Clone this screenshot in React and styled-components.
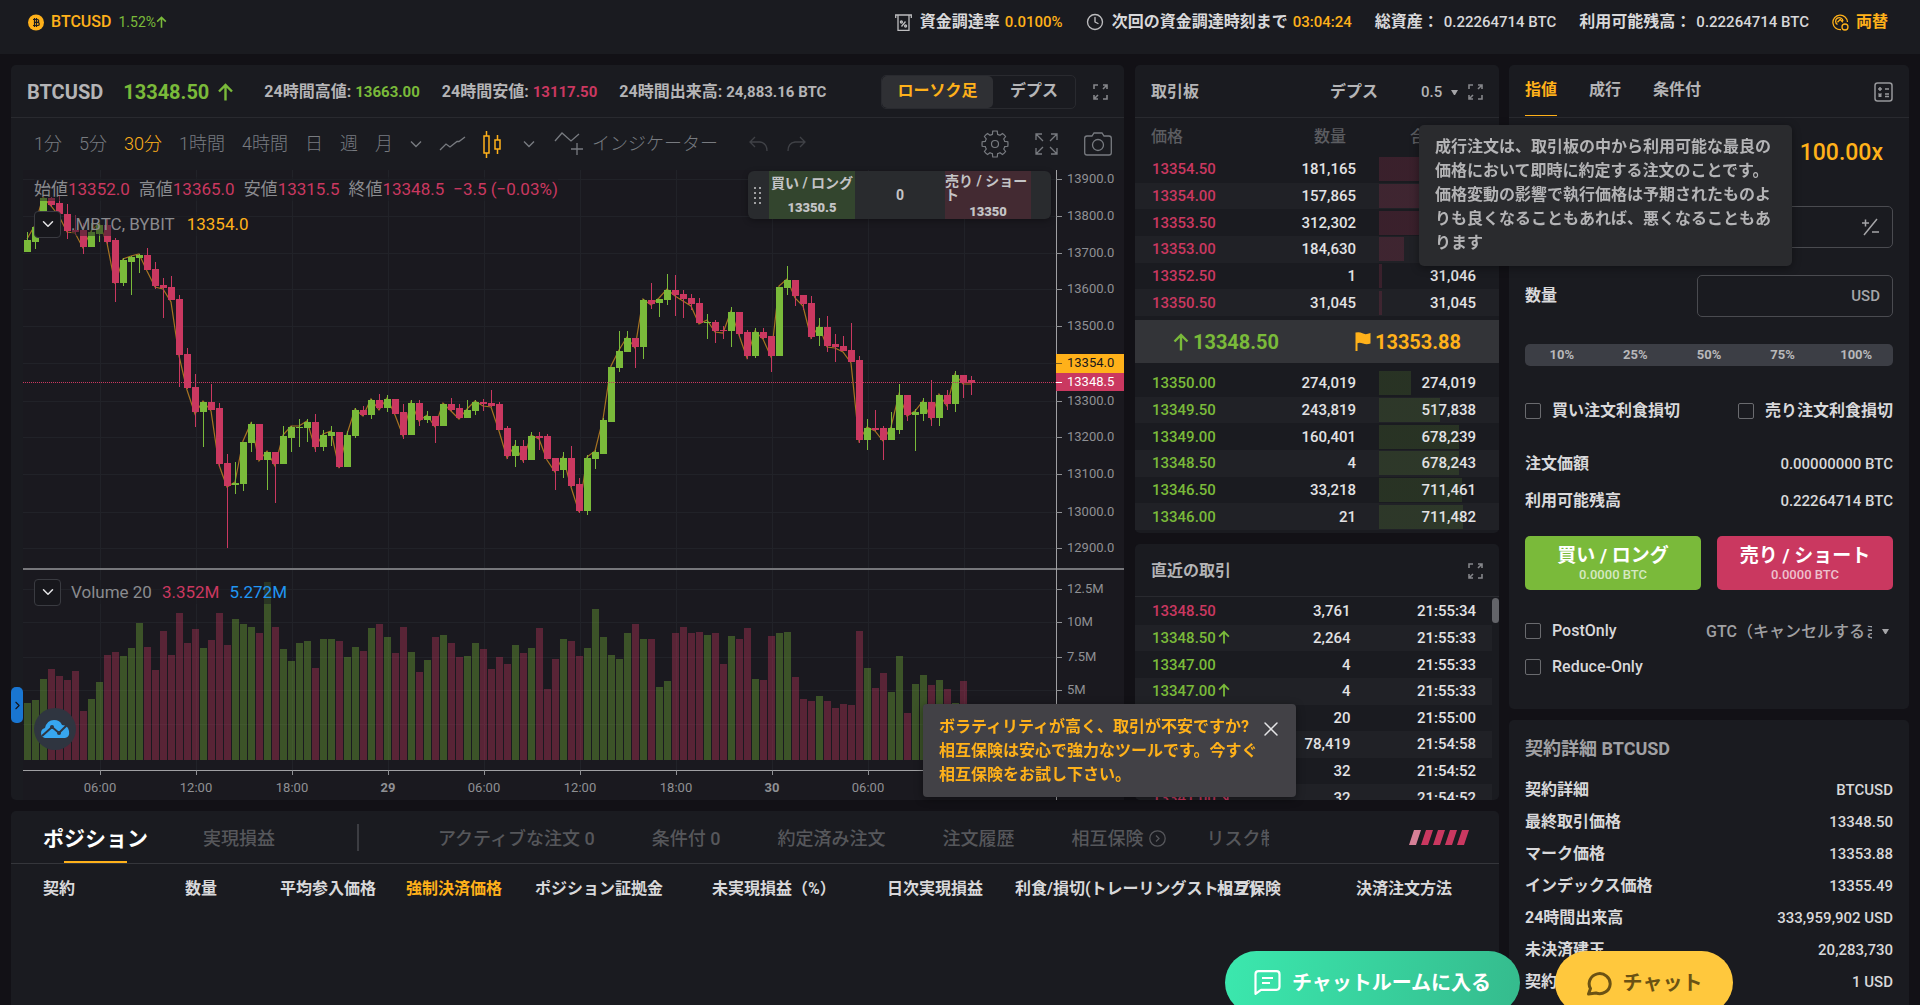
import React from 'react';
import styled, { createGlobalStyle, css } from 'styled-components';
import { ChevronDown, ChevronRight, Clock, X } from 'lucide-react';

const green = '#7aba3a';
const red = '#ca3860';
const orange = '#ffb11a';
const panel = '#1a1b20';

const GlobalStyle = createGlobalStyle`
  * {
    box-sizing: border-box;
  }

  body {
    margin: 0;
    background: #121116;
  }

  body, button, input, select {
    font-family: Roboto, "Noto Sans CJK JP", sans-serif;
  }

  button {
    padding: 0;
    border: 0;
    background: none;
    color: inherit;
    font-size: inherit;
    font-weight: inherit;
    line-height: inherit;
    cursor: pointer;
  }

  table {
    border-collapse: collapse;
    table-layout: fixed;
  }

  svg {
    display: block;
    flex: none;
  }
`;

const Page = styled.div`
  height: 100vh;
  overflow: hidden;
  color: #d8d8da;
  font-size: 16px;
  font-weight: 700;
  line-height: 24px;
`;

const Num = styled.span`
  font-size: ${p => p.$size || 15}px;
  font-weight: ${p => p.$weight || 500};
  color: ${p => p.$color || 'inherit'};
`;

/* top bar */

const TopBar = styled.header`
  display: flex;
  justify-content: space-between;
  height: 54px;
  padding: 10px 32px 0 28px;
  background: ${panel};
`;

const TopGroup = styled.div`
  display: flex;
  align-items: center;
  height: 24px;
  gap: ${p => p.$gap}px;
  white-space: nowrap;
`;

const TopLink = styled.a`
  display: flex;
  align-items: center;
  gap: 7px;
  color: ${orange};
  text-decoration: none;
`;

const TopItem = styled.div`
  display: flex;
  align-items: center;
  gap: 5px;

  svg {
    margin-right: 3px;
  }
`;

/* layout */

const Layout = styled.main`
  display: grid;
  grid-template-columns: minmax(0, 1fr) 400px;
  gap: 10px;
  padding: 11px 11px 0;
`;

const Left = styled.div`
  display: grid;
  grid-template-columns: minmax(0, 1fr) 364px;
  gap: 11px;
  align-content: start;
`;

const Stack = styled.div`
  display: flex;
  flex-direction: column;
  gap: 11px;
  min-height: 0;
`;

const Panel = styled.section`
  background: ${panel};
  border-radius: 5px;
  min-width: 0;
`;

const PanelHead = styled.div`
  display: flex;
  align-items: center;
  height: 53px;
  padding: 2px 16px 0;
  border-bottom: 1px solid #292a2f;
  color: #b4b4b6;
  white-space: nowrap;
`;

const Push = styled.div`
  flex: 1;
`;

const IconButton = styled.button`
  display: flex;
  color: ${p => p.$color || '#85868a'};
`;

/* chart */

const ChartHead = styled(PanelHead)`
  gap: 22px;
`;

const Ticker = styled.div`
  display: flex;
  align-items: center;
  gap: 20px;
  margin-right: 8px;
  font-size: 20px;
  font-weight: 700;
`;

const Last = styled.div`
  display: flex;
  align-items: center;
  gap: ${p => (p.$tight ? 0 : 8)}px;
  color: ${p => p.$color};
`;

const Stat = styled.div`
  display: flex;
  gap: 4px;
`;

const ViewTools = styled.div`
  display: flex;
  align-items: center;
  gap: 17px;
`;

const Toggle = styled.div`
  display: flex;
  height: 34px;
  border: 1px solid #292a2f;
  border-radius: 5px;
`;

const ToggleButton = styled.button`
  width: ${p => (p.$active ? 111 : 82)}px;
  padding-bottom: 2px;
  border-radius: 5px;
  ${p => p.$active && css`
    background: #2f3034;
    color: ${orange};
  `}
`;

const Toolbar = styled.div`
  display: flex;
  align-items: center;
  gap: 17px;
  height: 52px;
  padding: 0 12px 0 23px;
  color: #787b80;
  font-size: 18px;
  font-weight: 300;
  white-space: nowrap;
`;

const Tool = styled.button`
  display: flex;
  align-items: center;
  gap: 8px;
  color: ${p => (p.$active ? orange : 'inherit')};
  opacity: ${p => (p.$dim ? 0.4 : 1)};
  margin-left: ${p => p.$gap || 0}px;
`;

const Canvas = styled.div`
  position: relative;
  margin-left: 12px;
  background: #1a191f;
`;

const Plot = styled.svg`
  width: 100%;
  height: auto;
  font-family: Roboto, sans-serif;
  font-size: 13px;
  font-weight: 400;
`;

const Legend = styled.div`
  position: absolute;
  left: 11px;
  top: ${p => p.$top}px;
  display: flex;
  align-items: center;
  gap: 10px;
  height: 26px;
  color: #8a8b8f;
  font-size: 17px;
  font-weight: 400;
  white-space: nowrap;
`;

const LegendText = styled.div`
  display: flex;
  gap: ${p => p.$gap}px;
  background: rgba(26, 25, 31, 0.5);

  b {
    font-weight: 400;
    color: ${p => p.$color || red};
  }
`;

const LegendButton = styled.button`
  display: flex;
  align-items: center;
  justify-content: center;
  width: 27px;
  height: 27px;
  border: 1px solid #3a3b41;
  border-radius: 4px;
  background: #17171c;
  color: #e4e4e6;
`;

const QuickOrder = styled.div`
  position: absolute;
  top: 1px;
  right: 73px;
  display: flex;
  align-items: stretch;
  width: 303px;
  height: 48px;
  padding-left: 6px;
  border-radius: 6px;
  background: #292b2e;
  box-shadow: 0 2px 6px rgba(0, 0, 0, 0.3);
  color: #c4c4c6;
  font-size: 14px;
`;

const Grip = styled.div`
  display: grid;
  grid-template-columns: 2px 2px;
  gap: 3px;
  align-content: center;
  width: 15px;

  i {
    width: 2px;
    height: 2px;
    background: #a0a0a2;
  }
`;

const QuickSide = styled.button`
  display: flex;
  flex-direction: column;
  justify-content: space-between;
  width: 86px;
  padding: ${p => (p.$wrap ? '3px 0 0' : '5px 0 4px')};
  background: ${p => p.$bg};
  line-height: 14px;
  text-align: ${p => (p.$wrap ? 'left' : 'center')};
  word-break: break-all;

  b {
    align-self: center;
    font-size: 13px;
  }

  span {
    align-self: ${p => (p.$wrap ? 'stretch' : 'center')};
  }
`;

const QuickSize = styled.div`
  display: flex;
  align-items: center;
  justify-content: center;
  width: 90px;
`;

const Handle = styled.button`
  position: absolute;
  left: -12px;
  top: 517px;
  display: flex;
  align-items: center;
  width: 12px;
  height: 36px;
  border-radius: 5px;
  background: #1976d2;
  color: #14141a;
`;

const Cloud = styled.a`
  position: absolute;
  left: 11px;
  top: 538px;
`;

/* order book and trades */

const DataTable = styled.table`
  width: 100%;
  height: ${p => p.$height}px;
  font-size: 15px;
  font-weight: 500;
  line-height: 20px;
  color: #e2e2e4;

  th {
    height: 38px;
    padding: 0;
    font-size: 16px;
    font-weight: 500;
    color: #5c5d61;
  }

  td {
    padding: 0;
  }

  tbody tr:nth-child(even) {
    background: #202126;
  }
`;

const PriceCell = styled.td`
  width: ${p => p.$width}px;
  && {
    padding-left: 17px;
  }
  color: ${p => (p.$up ? green : red)};
  white-space: nowrap;

  svg {
    display: inline-block;
    margin-left: 2px;
    vertical-align: -1px;
  }
`;

const NumCell = styled.td`
  text-align: right;
  && {
    padding-right: ${p => p.$right}px;
  }
`;

const DepthCell = styled(NumCell)`
  background-image: linear-gradient(${p => p.$bar}, ${p => p.$bar});
  background-repeat: no-repeat;
  background-position: left center;
`;

const HeadCell = styled.th`
  width: ${p => p.$width}px;
  text-align: ${p => p.$align || 'left'};
  && {
    padding: 0 ${p => p.$right || 0}px 0 ${p => p.$left || 0}px;
  }
`;

const Mark = styled.div`
  display: grid;
  grid-template-columns: 1fr 1fr;
  align-items: center;
  justify-items: center;
  height: 43px;
  margin: 4px 0 7px;
  background: #333438;
  font-size: 20px;
  font-weight: 700;

  div {
    gap: 4px;
  }
`;

const Book = styled(Panel)`
  padding-bottom: 3px;
`;

const Precision = styled.select`
  width: 30px;
  margin-left: 43px;
  padding: 0;
  border: 0;
  appearance: none;
  background: none;
  color: inherit;
  font-size: 15px;
  font-weight: 500;
`;

const Caret = styled.i`
  width: 7px;
  margin-right: ${p => p.$right || 0}px;
  border: solid transparent;
  border-width: 5px 3px 0;
  border-top-color: #a5a5a8;
`;

const Trades = styled(Panel)`
  display: flex;
  flex-direction: column;
  flex: 1 1 0;
  min-height: 0;
  overflow: hidden;
`;

const TradesBody = styled.div`
  display: flex;
  align-items: flex-start;
  flex: 1 1 0;
  min-height: 0;
  padding-top: 1px;
  overflow: hidden;
`;

const Thumb = styled.div`
  flex: none;
  width: 7px;
  height: 25px;
  border-radius: 4px;
  background: #636469;
`;

/* positions */

const Positions = styled(Panel)`
  grid-column: 1 / -1;
  min-height: 240px;
`;

const TabRow = styled.div`
  display: flex;
  align-items: center;
  height: 53px;
  padding: 0 30px 0 32px;
  border-bottom: 1px solid #35363b;
  white-space: nowrap;
  color: #56575b;
  font-size: 18px;
`;

const TabGroup = styled.div`
  display: flex;
  align-items: center;
  gap: ${p => p.$gap}px;
  height: 100%;
`;

const BigTab = styled.button`
  position: relative;
  display: flex;
  align-items: center;
  gap: 6px;
  height: 100%;
  padding-top: 3px;
  font-weight: 500;
  ${p => p.$active && css`
    color: #fff;
    font-size: 21px;
    font-weight: 700;

    &::after {
      content: '';
      position: absolute;
      left: 20%;
      right: 20%;
      bottom: 0;
      height: 2px;
      background: ${orange};
    }
  `}
`;

const ClippedTab = styled(BigTab)`
  width: 63px;
  margin-left: -17px;
  overflow: hidden;
`;

const Divider = styled.div`
  width: 2px;
  height: 27px;
  margin: 0 79px 0 82px;
  background: #3c3d42;
`;

const PositionTable = styled.table`
  width: 100%;
  margin-top: 13px;

  th {
    padding: 0;
    font-weight: 700;
    text-align: left;
    white-space: nowrap;
  }
`;

const PositionHead = styled.th`
  width: ${p => (p.$width ? `${p.$width}px` : 'auto')};
  color: ${p => (p.$hot ? orange : 'inherit')};
`;

const TableWrap = styled.div`
  padding-left: 32px;
`;

/* order form */

const FormTab = styled.button`
  position: relative;
  height: 50px;
  margin-right: 32px;
  padding-bottom: 5px;
  ${p => p.$active && css`
    color: ${orange};

    &::after {
      content: '';
      position: absolute;
      left: 0;
      right: 0;
      bottom: 1px;
      height: 1px;
      background: ${orange};
    }
  `}
`;

const Form = styled.form`
  padding: 0 16px 30px;
`;

const FormRow = styled.div`
  display: flex;
  align-items: center;
  justify-content: space-between;
  gap: 16px;
  min-height: 24px;
  margin-top: ${p => p.$gap}px;
  white-space: nowrap;
`;

const Leverage = styled(FormRow)`
  height: 70px;
  padding-right: 10px;
`;

const Field = styled.div`
  display: flex;
  align-items: center;
  width: 196px;
  height: 42px;
  padding: 0 12px;
  border: 1px solid #4a4b50;
  border-radius: 5px;
  color: #a5a5a8;

  input {
    flex: 1;
    min-width: 0;
    border: 0;
    outline: 0;
    background: none;
    color: #fff;
    font-size: 15px;
  }
`;

const Percents = styled.div`
  display: grid;
  grid-template-columns: repeat(5, 1fr);
  height: 22px;
  margin-top: 27px;
  border-radius: 5px;
  background: #3c3e45;
  color: #b8b8ba;
  font-size: 13px;
  font-weight: 700;
  line-height: 22px;
`;

const Check = styled.label`
  display: flex;
  align-items: center;
  gap: 11px;
  font-weight: ${p => p.$weight || 700};

  input {
    appearance: none;
    width: 16px;
    height: 16px;
    margin: 0;
    border: 1px solid #6a6b6f;
    border-radius: 2px;
  }
`;

const Submit = styled.button`
  flex: 1;
  height: 54px;
  border-radius: 5px;
  background: ${p => p.$bg};
  color: #fff;
  font-size: 19px;
  line-height: 22px;

  small {
    display: block;
    color: rgba(255, 255, 255, 0.7);
    font-size: 13px;
    font-weight: 500;
    line-height: 15px;
  }
`;

const Tif = styled.div`
  display: flex;
  align-items: center;
  gap: 10px;
  margin-right: 4px;
  color: #a0a0a3;

  select {
    width: 166px;
    padding: 0;
    border: 0;
    appearance: none;
    background: none;
    color: inherit;
    font-size: 16px;
    font-weight: 500;
  }
`;

const Details = styled(Panel)`
  padding: 17px 16px;

  h2 {
    margin: 0 0 13px;
    color: #a0a0a3;
    font-size: 18px;
    font-weight: 700;
  }
`;

const DetailRow = styled.div`
  display: flex;
  justify-content: space-between;
  align-items: center;
  height: 32px;
`;

/* overlays */

const Tooltip = styled.div`
  position: fixed;
  top: 125px;
  right: 128px;
  width: 373px;
  padding: 10px 16px 11px;
  border-radius: 5px;
  background: #2a2b2e;
  color: #b4b4b6;
  box-shadow: 0 2px 8px rgba(0, 0, 0, 0.4);
`;

const Notice = styled.div`
  position: fixed;
  left: 923px;
  bottom: 208px;
  width: 373px;
  height: 93px;
  padding: 11px 16px;
  border-radius: 4px;
  background: #424146;
  color: ${orange};
  box-shadow: 0 2px 8px rgba(0, 0, 0, 0.4);

  p {
    margin: 0;
    white-space: pre;
  }
`;

const Close = styled(IconButton)`
  position: absolute;
  top: 13px;
  right: 13px;
`;

const ChatButton = styled.button`
  position: fixed;
  right: ${p => p.$right}px;
  bottom: -9px;
  display: flex;
  align-items: center;
  justify-content: center;
  gap: 11px;
  width: ${p => p.$width}px;
  height: 63px;
  border-radius: 32px;
  background: ${p => p.$bg};
  color: ${p => p.$color};
  font-size: 20px;
  font-weight: 700;
`;

/* icons */

const Arrow = ({ w = 12, h = 13, down }) => (
  <svg width={w} height={h} viewBox="0 0 16 18" fill="none" stroke="currentColor" strokeWidth="2.4">
    <path d={down ? 'M2 2l10 12M13 5v10H4' : 'M8 17.5V2M1.5 8.5L8 2l6.5 6.5'} />
  </svg>
);

const Expand = () => (
  <svg width="15" height="16" viewBox="0 0 15 16" fill="none" stroke="currentColor" strokeWidth="1.6">
    <path d="M1 5V1h4M10 1h4v4M14 1l-4 4M1 11v4h4M1 15l4-4M14 11v4h-4" />
  </svg>
);

const Coin = () => (
  <svg width="16" height="17" viewBox="0 0 16 17">
    <circle cx="8" cy="8.5" r="8" fill={orange} />
    <path d="M6.5 4v9M8.5 4v9M5 5.5h4.2q1.6 0 1.6 1.4T9.2 8.3H6.5h3q1.8 0 1.8 1.6t-1.8 1.6H5" fill="none" stroke="#1a1b20" strokeWidth="1.2" />
  </svg>
);

const Funding = () => (
  <svg width="17" height="17" viewBox="0 0 17 17" fill="none" stroke="#bdbdbf" strokeWidth="1.3">
    <path d="M0.7 4V1h15.6v3M3 1.5v14.8h11V1.5M6.5 12.5l4-5" />
    <circle cx="6.4" cy="8" r="1" />
    <circle cx="10.6" cy="12" r="1" />
  </svg>
);

const Exchange = () => (
  <svg width="17" height="17" viewBox="0 0 17 17" fill="none" stroke={orange} strokeWidth="1.3">
    <path d="M9 15.6A7.3 7.3 0 1 1 15.5 8M5.5 10.5A3.7 3.7 0 1 1 11 7M5.5 8.2l2.7-2.7 2.7 2.7" />
    <circle cx="13" cy="13" r="3" />
  </svg>
);

const gearPath = Array.from({ length: 8 }, (_, i) => {
  const at = (r, deg) => {
    const a = ((i * 45 + deg) * Math.PI) / 180;
    return `${(14 + r * Math.cos(a)).toFixed(1)} ${(14 + r * Math.sin(a)).toFixed(1)}`;
  };
  return `${i ? 'L' : 'M'}${at(10, -15)}L${at(13, -10)}A13 13 0 0 1 ${at(13, 10)}L${at(10, 15)}A10 10 0 0 1 ${at(10, 30)}`;
}).join('');

const Gear = () => (
  <svg width="28" height="28" viewBox="0 0 28 28" fill="none" stroke="currentColor" strokeWidth="1.2">
    <path d={`${gearPath}Z`} />
    <circle cx="14" cy="14" r="3.5" />
  </svg>
);

const FullScreen = () => (
  <svg width="23" height="22" viewBox="0 0 23 22" fill="none" stroke="currentColor" strokeWidth="1.3">
    <path d="M1 7V1h6M1 1l7 7M16 1h6v6M22 1l-7 7M1 15v6h6M1 21l7-7M22 15v6h-6M22 21l-7-7" />
  </svg>
);

const Camera = () => (
  <svg width="28" height="24" viewBox="0 0 28 24" fill="none" stroke="currentColor" strokeWidth="1.3">
    <path d="M3 4h5l2-3h8l2 3h5q2.3 0 2.3 2.3v14.4q0 2.3-2.3 2.3H3Q.7 23 .7 20.7V6.3Q.7 4 3 4z" />
    <circle cx="14" cy="13" r="5.5" />
  </svg>
);

const Chevron = () => (
  <svg width="12" height="8" viewBox="0 0 12 8" fill="none" stroke="currentColor" strokeWidth="1.4">
    <path d="M1 1.500l5 5 5-5" />
  </svg>
);

const LineTool = () => (
  <svg width="27" height="16" viewBox="0 0 27 16" fill="none" stroke="currentColor" strokeWidth="1.3">
    <path d="M1 14l6-6 4 3 7-5.5h2L26 1" />
  </svg>
);

const CandleTool = () => (
  <svg width="18" height="27" viewBox="0 0 18 27" fill="none" stroke="currentColor" strokeWidth="1.5">
    <path d="M1 5h5v17H1zM3.5 0v5M3.5 22v5M12 9h5v9h-5zM14.5 4v5M14.5 18v5" />
  </svg>
);

const IndicatorTool = () => (
  <svg width="30" height="24" viewBox="0 0 30 24" fill="none" stroke="currentColor" strokeWidth="1.3">
    <path d="M1 9l7-8 9 8 8-7M23 11v12M17 17h12" />
  </svg>
);

const Redo = ({ flip }) => (
  <svg width="19" height="16" viewBox="0 0 19 16" fill="none" stroke="currentColor" strokeWidth="1.3">
    <path d={flip ? 'M6 1L1 6l5 5M1 6h10q7 1 7 9' : 'M13 1l5 5-5 5M18 6H8q-7 1-7 9'} />
  </svg>
);

const Flag = () => (
  <svg width="16" height="19" viewBox="0 0 16 19" fill={orange}>
    <path d="M0.5 0.5q4-1 7 .8t8-.3v10.500q-4 1.500-7.500 0t-5.500-.3V19h-2z" />
  </svg>
);

const Calculator = () => (
  <svg width="19" height="20" viewBox="0 0 19 20" fill="none" stroke="#97989b" strokeWidth="1.5">
    <rect x="1" y="1" width="17" height="18" rx="2.5" />
    <path d="M4 7h4M6 5v4M11 7h4M4.5 11.5l3 3M7.5 11.5l-3 3M11 12h4M11 14.5h4" />
  </svg>
);

const PlusMinus = () => (
  <svg width="19" height="18" viewBox="0 0 19 18" fill="none" stroke="currentColor" strokeWidth="1.5">
    <path d="M1 5h7M4.5 1.5v7M3 17L16 1M11 14h7" />
  </svg>
);

const CircleArrow = () => (
  <svg width="17" height="17" viewBox="0 0 17 17" fill="none" stroke="currentColor" strokeWidth="1.3">
    <circle cx="8.5" cy="8.5" r="7.7" />
    <path d="M7 5.5l3 3-3 3" />
  </svg>
);

const Stripes = () => (
  <svg width="60" height="15" viewBox="0 0 60 15">
    {[0, 1, 2, 3, 4].map(i => (
      <path key={i} d={`M${i * 12 + 5} 0h7l-5 15H${i * 12}z`} fill={i ? red : '#d68097'} />
    ))}
  </svg>
);

const CloudLogo = () => (
  <svg width="42" height="42" viewBox="0 0 42 42">
    <circle cx="21" cy="21" r="21" fill="#2f3540" />
    <path d="M11 30q-4-1-4-5 0-4 4-5 2-8 9-8 6 0 8 5 6 0 7 6 1 6-4 7z" fill="#37a6ef" />
    <path d="M8 28l10-9 7 6 9-9" fill="none" stroke="#2f3540" strokeWidth="2" />
    <circle cx="18" cy="19" r="2" fill="#2f3540" />
    <circle cx="25" cy="25" r="2" fill="#2f3540" />
  </svg>
);

const RoomIcon = () => (
  <svg width="27" height="25" viewBox="0 0 27 25" fill="none" stroke="currentColor" strokeWidth="2.2">
    <path d="M4.5 1.2h18q3 0 3 3v12.6q0 3-3 3H7l-5.5 4V4.2q0-3 3-3zM8 8h11M8 13h8" strokeLinejoin="round" />
  </svg>
);

const ChatIcon = () => (
  <svg width="26" height="26" viewBox="0 0 26 26" fill="none" stroke="currentColor" strokeWidth="3">
    <path d="M2.5 24l2-5.5A10.5 10 0 1 1 10 23z" strokeLinejoin="round" />
  </svg>
);

/* chart data: side, high, body top, body bottom, low, volume top; three units to a pixel */
const candles = [
  [1, 157, 181, 217, 217, 429], [1, 125, 140, 187, 206, 420], [1, 54, 54, 140, 140, 357],
  [0, 50, 54, 75, 82, 328], [0, 48, 69, 103, 110, 348], [0, 73, 102, 152, 177, 360],
  [0, 105, 150, 155, 165, 333], [0, 128, 150, 201, 222, 453], [1, 128, 157, 201, 201, 417],
  [1, 128, 134, 163, 187, 365], [0, 116, 134, 186, 192, 285], [0, 175, 181, 309, 366, 276],
  [1, 234, 241, 309, 318, 288], [1, 228, 231, 245, 345, 264], [1, 222, 226, 234, 278, 189],
  [0, 205, 226, 270, 270, 261], [0, 246, 266, 318, 326, 329], [0, 294, 314, 324, 414, 213],
  [0, 289, 321, 361, 361, 285], [0, 346, 358, 525, 621, 160], [0, 505, 521, 625, 627, 249],
  [0, 582, 621, 697, 741, 208], [1, 666, 666, 697, 801, 264], [0, 613, 666, 690, 690, 240],
  [0, 669, 685, 852, 861, 160], [0, 822, 849, 918, 1104, 256], [1, 846, 909, 915, 942, 177],
  [1, 786, 786, 912, 933, 192], [1, 726, 733, 789, 817, 201], [0, 733, 733, 840, 840, 220],
  [1, 817, 817, 840, 930, 66], [0, 817, 817, 853, 969, 201], [1, 738, 769, 853, 853, 268],
  [1, 738, 741, 774, 817, 304], [1, 717, 741, 744, 801, 249], [1, 717, 726, 745, 786, 244],
  [0, 702, 726, 801, 817, 324], [1, 750, 765, 801, 813, 237], [1, 738, 757, 769, 798, 237],
  [0, 757, 757, 861, 865, 244], [1, 753, 766, 861, 861, 292], [1, 685, 690, 769, 774, 261],
  [0, 678, 690, 705, 708, 273], [1, 658, 661, 705, 717, 204], [0, 642, 661, 685, 690, 192],
  [1, 645, 657, 685, 697, 232], [0, 657, 657, 702, 702, 280], [0, 673, 697, 765, 777, 201],
  [1, 661, 669, 765, 765, 276], [0, 661, 669, 720, 738, 336], [1, 694, 709, 720, 729, 300],
  [0, 709, 709, 738, 789, 232], [1, 673, 673, 738, 738, 225], [0, 654, 673, 690, 693, 249],
  [0, 673, 685, 714, 717, 291], [1, 661, 690, 714, 714, 288], [1, 661, 666, 693, 705, 249],
  [0, 657, 666, 673, 693, 268], [0, 630, 669, 678, 682, 328], [0, 666, 673, 750, 750, 291],
  [0, 738, 745, 829, 837, 312], [1, 780, 798, 829, 861, 256], [0, 780, 798, 840, 849, 280],
  [1, 757, 769, 840, 840, 264], [0, 757, 769, 774, 810, 204], [0, 762, 769, 837, 837, 388],
  [0, 834, 834, 872, 930, 297], [1, 816, 834, 870, 894, 237], [0, 798, 834, 918, 921, 244],
  [0, 894, 913, 993, 999, 288], [1, 825, 834, 993, 1005, 264], [1, 810, 816, 837, 866, 148],
  [1, 715, 721, 821, 821, 232], [1, 561, 561, 725, 725, 285], [1, 453, 513, 564, 577, 297],
  [1, 453, 474, 517, 517, 220], [0, 474, 474, 501, 565, 192], [1, 357, 361, 501, 537, 237],
  [0, 309, 361, 371, 386, 237], [1, 357, 357, 369, 410, 381], [1, 282, 330, 361, 374, 364],
  [0, 285, 330, 345, 409, 220], [0, 330, 342, 358, 414, 201], [0, 342, 354, 373, 389, 220],
  [0, 354, 369, 429, 429, 216], [1, 402, 425, 429, 477, 225], [0, 420, 426, 453, 489, 220],
  [0, 438, 450, 454, 477, 312], [1, 381, 397, 453, 501, 228], [0, 397, 397, 462, 470, 237],
  [0, 450, 457, 529, 538, 204], [1, 444, 457, 528, 533, 357], [0, 445, 457, 474, 477, 360],
  [0, 469, 469, 528, 577, 228], [1, 321, 321, 529, 529, 220], [1, 258, 301, 325, 345, 216],
  [0, 301, 301, 349, 377, 352], [0, 345, 345, 373, 389, 417], [0, 349, 369, 470, 477, 424],
  [1, 414, 441, 469, 498, 408], [0, 409, 441, 498, 517, 424], [0, 462, 492, 501, 546, 444],
  [0, 469, 498, 513, 513, 432], [0, 429, 510, 546, 546, 436], [0, 529, 541, 780, 789, 213],
  [1, 717, 745, 780, 810, 324], [0, 690, 745, 749, 753, 384], [0, 737, 745, 780, 841, 340],
  [1, 697, 745, 780, 780, 396], [1, 612, 645, 750, 761, 288], [0, 645, 645, 705, 722, 460],
  [1, 686, 697, 705, 813, 372], [1, 654, 666, 701, 722, 345], [0, 601, 666, 713, 737, 376],
  [1, 645, 645, 713, 737, 360], [0, 630, 645, 673, 689, 388], [1, 573, 585, 673, 697, 429],
  [0, 585, 585, 609, 654, 364], [0, 588, 601, 609, 645, 463],
];

const priceTicks = [9, 46, 83, 119, 156, 193, 231, 267, 304, 342, 378];
const volumeTicks = [['12.5M', 419], ['10M', 452], ['7.5M', 487], ['5M', 520], ['2.5M', 554]];
const times = ['06:00', '12:00', '18:00', '29', '06:00', '12:00', '18:00', '30', '06:00', '12:00'];

const level = v => Math.round(v / 3) + 10;

const Chart = () => {
  const closes = candles.map(([up, , top, bottom], i) => `${i * 8 + 4},${level(up ? top - 4 : bottom + 4)}`);
  return (
    <Plot viewBox="0 0 1101 630" role="img" aria-label="BTCUSD 30分">
      <g stroke="#212228">
        {priceTicks.map(y => <path key={y} d={`M0 ${y}.5H1033`} />)}
        {volumeTicks.map(([, y]) => <path key={y} d={`M0 ${y}.5H1033`} />)}
        {times.map((t, i) => <path key={i} d={`M${77 + i * 96}.5 0V600`} />)}
      </g>
      <polyline points={closes.join(' ')} fill="none" stroke="#a87422" strokeWidth="1.2" />
      {candles.map(([up, high, top, bottom, low, vol], i) => (
        <g key={i} fill={up ? green : red}>
          <rect x={i * 8 + 4} y={level(high)} width="1" height={level(low) - level(high)} />
          <rect x={i * 8 + 1} y={level(top)} width="7" height={Math.max(1, level(bottom) - level(top))} />
          <rect x={i * 8 + 1} y={390 + Math.round(vol / 3)} width="7" height={200 - Math.round(vol / 3)} opacity="0.36" />
        </g>
      ))}
      <path d="M0 212.5H1033" stroke={red} strokeDasharray="1 1" />
      <path d="M0 399H1101" stroke="#77777b" strokeWidth="2" />
      <path d="M0 600.5H1033M1033.5 0V630" stroke="#a0a0a3" />
      <g fill="#8f9094">
        {priceTicks.map((y, i) => (
          <g key={y}>
            <path d={`M1033 ${y}.5h6`} stroke="#8f9094" />
            <text x="1044" y={y + 4}>{`${13900 - i * 100}.0`}</text>
          </g>
        ))}
        {volumeTicks.map(([label, y]) => (
          <g key={y}>
            <path d={`M1033 ${y}.5h6`} stroke="#8f9094" />
            <text x="1044" y={y + 4}>{label}</text>
          </g>
        ))}
        {times.map((t, i) => (
          <g key={i}>
            <path d={`M${77 + i * 96}.5 600v5`} stroke="#8f9094" />
            <text x={77 + i * 96} y="622" textAnchor="middle" fontWeight={t.length < 3 ? 700 : 400}>{t}</text>
          </g>
        ))}
      </g>
      <rect x="1033" y="184" width="68" height="19" fill={orange} />
      <rect x="1033" y="203" width="68" height="18" fill={red} />
      <path d="M1033 193.5h6" stroke="#7a5a1a" />
      <path d="M1033 212.5h6" stroke="#fff" />
      <text x="1044" y="197" fill="#17171c">13354.0</text>
      <text x="1044" y="216" fill="#fff">13348.5</text>
    </Plot>
  );
};

const ChartPanel = () => (
  <Panel>
    <ChartHead>
      <Ticker>
        <span>BTCUSD</span>
        <Last $color={green}>13348.50 <Arrow w={17} h={18} /></Last>
      </Ticker>
      <Stat>24時間高値: <Num $weight={700} $color={green}>13663.00</Num></Stat>
      <Stat>24時間安値: <Num $weight={700} $color={red}>13117.50</Num></Stat>
      <Stat>24時間出来高: <Num $weight={700}>24,883.16 BTC</Num></Stat>
      <Push />
      <ViewTools>
        <Toggle>
          <ToggleButton $active>ローソク足</ToggleButton>
          <ToggleButton>デプス</ToggleButton>
        </Toggle>
        <IconButton aria-label="拡大"><Expand /></IconButton>
      </ViewTools>
    </ChartHead>
    <Toolbar>
      {['1分', '5分', '30分', '1時間', '4時間', '日', '週', '月'].map(t => (
        <Tool key={t} $active={t === '30分'}>{t}</Tool>
      ))}
      <Tool aria-label="時間足"><Chevron /></Tool>
      <Tool aria-label="ライン"><LineTool /></Tool>
      <Tool $active aria-label="ローソク"><CandleTool /></Tool>
      <Tool $gap={5} aria-label="種類"><Chevron /></Tool>
      <Tool $gap={2}><IndicatorTool />インジケーター</Tool>
      <Tool $dim $gap={14} aria-label="元に戻す"><Redo flip /></Tool>
      <Tool $dim $gap={2} aria-label="やり直す"><Redo /></Tool>
      <Push />
      <Tool aria-label="設定"><Gear /></Tool>
      <Tool $gap={9} aria-label="全画面"><FullScreen /></Tool>
      <Tool $gap={9} aria-label="撮影"><Camera /></Tool>
    </Toolbar>
    <Canvas>
      <Chart />
      <Legend $top={6}>
        <LegendText $gap={9}>
          <span>始値<b>13352.0</b></span>
          <span>高値<b>13365.0</b></span>
          <span>安値<b>13315.5</b></span>
          <span>終値<b>13348.5</b></span>
          <b>−3.5 (−0.03%)</b>
        </LegendText>
      </Legend>
      <Legend $top={41}>
        <LegendButton aria-label="閉じる"><ChevronDown size={18} /></LegendButton>
        <LegendText $gap={12} $color={orange}>.MBTC, BYBIT <b>13354.0</b></LegendText>
      </Legend>
      <Legend $top={409}>
        <LegendButton aria-label="閉じる"><ChevronDown size={18} /></LegendButton>
        <LegendText $gap={10}>Volume 20 <b>3.352M</b> <Num $size={17} $weight={400} $color="#2196f3">5.272M</Num></LegendText>
      </Legend>
      <QuickOrder>
        <Grip>{Array.from({ length: 8 }, (_, i) => <i key={i} />)}</Grip>
        <QuickSide $bg="#33452e"><span>買い / ロング</span><b>13350.5</b></QuickSide>
        <QuickSize>0</QuickSize>
        <QuickSide $bg="#432a32" $wrap><span>売り / ショート</span><b>13350</b></QuickSide>
      </QuickOrder>
      <Handle aria-label="ツール"><ChevronRight size={13} /></Handle>
      <Cloud href="#chart" aria-label="TradingView"><CloudLogo /></Cloud>
    </Canvas>
  </Panel>
);

const asks = [
  ['13354.50', '181,165', 867008],
  ['13354.00', '157,865', 685843],
  ['13353.50', '312,302', 527978],
  ['13353.00', '184,630', 215676],
  ['13352.50', '1', 31046],
  ['13350.50', '31,045', 31045],
];

const bids = [
  ['13350.00', '274,019', 274019],
  ['13349.50', '243,819', 517838],
  ['13349.00', '160,401', 678239],
  ['13348.50', '4', 678243],
  ['13346.50', '33,218', 711461],
  ['13346.00', '21', 711482],
];

const BookRows = ({ rows, up }) => (
  <tbody>
    {rows.map(([price, size, total]) => (
      <tr key={price}>
        <PriceCell $up={up} $width={110}>{price}</PriceCell>
        <NumCell $right={23}>{size}</NumCell>
        <DepthCell
          $right={23}
          $bar={up ? 'rgba(122, 186, 58, 0.15)' : 'rgba(202, 56, 96, 0.18)'}
          style={{ width: 120, backgroundSize: `${Math.floor(total / 8470)}px 24px` }}
        >
          {total.toLocaleString('en-US')}
        </DepthCell>
      </tr>
    ))}
  </tbody>
);

const OrderBook = () => (
  <Book>
    <PanelHead>
      取引板
      <Push />
      <span>デプス</span>
      <Precision aria-label="刻み"><option>0.5</option></Precision>
      <Caret $right={10} />
      <IconButton aria-label="拡大"><Expand /></IconButton>
    </PanelHead>
    <DataTable $height={198}>
      <thead>
        <tr>
          <HeadCell $width={110} $left={16}>価格</HeadCell>
          <HeadCell $width={134} $align="right" $right={33}>数量</HeadCell>
          <HeadCell $width={120} $left={31}>合計</HeadCell>
        </tr>
      </thead>
      <BookRows rows={asks} />
    </DataTable>
    <Mark>
      <Last $color={green}><Arrow w={16} h={18} />13348.50</Last>
      <Last $color={orange}><Flag />13353.88</Last>
    </Mark>
    <DataTable $height={160}>
      <BookRows rows={bids} up />
    </DataTable>
  </Book>
);

const trades = [
  ['13348.50', 0, '', '3,761', '21:55:34'],
  ['13348.50', 1, 'up', '2,264', '21:55:33'],
  ['13347.00', 1, '', '4', '21:55:33'],
  ['13347.00', 1, 'up', '4', '21:55:33'],
  ['13346.50', 0, '', '20', '21:55:00'],
  ['13346.50', 0, '', '78,419', '21:54:58'],
  ['13346.50', 0, '', '32', '21:54:52'],
  ['13341.00', 0, 'down', '32', '21:54:52'],
];

const RecentTrades = () => (
  <Trades>
    <PanelHead>
      直近の取引
      <Push />
      <IconButton aria-label="拡大"><Expand /></IconButton>
    </PanelHead>
    <TradesBody>
      <DataTable $height={213}>
        <tbody>
          {trades.map(([price, up, dir, size, time], i) => (
            <tr key={i}>
              <PriceCell $up={up} $width={110}>
                {price}
                {dir && <Arrow down={dir === 'down'} h={14} />}
              </PriceCell>
              <NumCell $right={18}>{size}</NumCell>
              <NumCell $right={16}>{time}</NumCell>
            </tr>
          ))}
        </tbody>
      </DataTable>
      <Thumb />
    </TradesBody>
  </Trades>
);

const columns = [
  ['契約', 142],
  ['数量', 95],
  ['平均参入価格', 126],
  ['強制決済価格', 129, true],
  ['ポジション証拠金', 177],
  ['未実現損益（%）', 175],
  ['日次実現損益', 128],
  ['利食/損切(トレーリングストップ)', 202],
  ['相互保険', 139],
  ['決済注文方法'],
];

const PositionPanel = () => (
  <Positions>
    <TabRow>
      <TabGroup $gap={55}>
        <BigTab $active>ポジション</BigTab>
        <BigTab>実現損益</BigTab>
      </TabGroup>
      <Divider />
      <TabGroup $gap={57}>
        <BigTab>アクティブな注文 0</BigTab>
        <BigTab>条件付 0</BigTab>
        <BigTab>約定済み注文</BigTab>
        <BigTab>注文履歴</BigTab>
        <BigTab>相互保険 <CircleArrow /></BigTab>
        <ClippedTab>リスク制限</ClippedTab>
      </TabGroup>
      <Push />
      <Stripes />
    </TabRow>
    <TableWrap>
      <PositionTable>
        <thead>
          <tr>
            {columns.map(([label, width, hot]) => (
              <PositionHead key={label} $width={width} $hot={hot}>{label}</PositionHead>
            ))}
          </tr>
        </thead>
      </PositionTable>
    </TableWrap>
  </Positions>
);

const OrderForm = () => (
  <Panel>
    <PanelHead>
      <FormTab $active>指値</FormTab>
      <FormTab>成行</FormTab>
      <FormTab>条件付</FormTab>
      <Push />
      <IconButton aria-label="計算機"><Calculator /></IconButton>
    </PanelHead>
    <Form onSubmit={e => e.preventDefault()}>
      <Leverage $gap={0}>
        <span>レバレッジ</span>
        <Num $size={23} $color={orange}>100.00x</Num>
      </Leverage>
      <FormRow $gap={18}>
        <label htmlFor="price">価格</label>
        <Field><input id="price" /><PlusMinus /></Field>
      </FormRow>
      <FormRow $gap={27}>
        <label htmlFor="qty">数量</label>
        <Field><input id="qty" /><Num>USD</Num></Field>
      </FormRow>
      <Percents>
        {[10, 25, 50, 75, 100].map(p => <button key={p} type="button">{p}%</button>)}
      </Percents>
      <FormRow $gap={33}>
        <Check><input type="checkbox" />買い注文利食損切</Check>
        <Check><input type="checkbox" />売り注文利食損切</Check>
      </FormRow>
      <FormRow $gap={29}>注文価額<Num>0.00000000 BTC</Num></FormRow>
      <FormRow $gap={13}>利用可能残高<Num>0.22264714 BTC</Num></FormRow>
      <FormRow $gap={23}>
        <Submit $bg={green}>買い / ロング<small>0.0000 BTC</small></Submit>
        <Submit $bg={red}>売り / ショート<small>0.0000 BTC</small></Submit>
      </FormRow>
      <FormRow $gap={29}>
        <Check $weight={500}><input type="checkbox" />PostOnly</Check>
        <Tif>
          <select aria-label="有効期間"><option>GTC（キャンセルするまで有効）</option></select>
          <Caret />
        </Tif>
      </FormRow>
      <FormRow $gap={12}>
        <Check $weight={500}><input type="checkbox" />Reduce-Only</Check>
      </FormRow>
    </Form>
  </Panel>
);

const details = [
  ['契約詳細', 'BTCUSD'],
  ['最終取引価格', '13348.50'],
  ['マーク価格', '13353.88'],
  ['インデックス価格', '13355.49'],
  ['24時間出来高', '333,959,902 USD'],
  ['未決済建玉', '20,283,730'],
  ['契約価値', '1 USD'],
];

const App = () => (
  <Page>
    <GlobalStyle />
    <TopBar>
      <TopGroup $gap={7}>
        <TopLink href="#btcusd"><Coin /><Num $size={16}>BTCUSD</Num></TopLink>
        <Last $color={green} $tight>
          <Num $size={14} $weight={400}>1.52%</Num>
          <Arrow w={11} h={12} />
        </Last>
      </TopGroup>
      <TopGroup $gap={23}>
        <TopItem><Funding />資金調達率<Num $color={orange}>0.0100%</Num></TopItem>
        <TopItem><Clock size={18} strokeWidth={1.8} color="#bdbdbf" />次回の資金調達時刻まで<Num $color={orange}>03:04:24</Num></TopItem>
        <TopItem>総資産：<Num>0.22264714 BTC</Num></TopItem>
        <TopItem>利用可能残高：<Num>0.22264714 BTC</Num></TopItem>
        <TopLink href="#exchange"><Exchange />両替</TopLink>
      </TopGroup>
    </TopBar>
    <Layout>
      <Left>
        <ChartPanel />
        <Stack>
          <OrderBook />
          <RecentTrades />
        </Stack>
        <PositionPanel />
      </Left>
      <Stack>
        <OrderForm />
        <Details>
          <h2>契約詳細 BTCUSD</h2>
          {details.map(([label, value]) => (
            <DetailRow key={label}>{label}<Num>{value}</Num></DetailRow>
          ))}
        </Details>
      </Stack>
    </Layout>
    <Tooltip role="tooltip">
      成行注文は、取引板の中から利用可能な最良の価格において即時に約定する注文のことです。価格変動の影響で執行価格は予期されたものよりも良くなることもあれば、悪くなることもあります
    </Tooltip>
    <Notice>
      <p>{'ボラティリティが高く、取引が不安ですか?\n相互保険は安心で強力なツールです。今すぐ\n相互保険をお試し下さい。'}</p>
      <Close $color="#e4e4e6" aria-label="閉じる"><X size={24} strokeWidth={1.5} /></Close>
    </Notice>
    <ChatButton $right={400} $width={295} $bg="linear-gradient(100deg, #3be8ae, #35bb8d)" $color="#fff">
      <RoomIcon />チャットルームに入る
    </ChatButton>
    <ChatButton $right={187} $width={178} $bg="#ffc83d" $color="#6b5214">
      <ChatIcon />チャット
    </ChatButton>
  </Page>
);

export default App;
